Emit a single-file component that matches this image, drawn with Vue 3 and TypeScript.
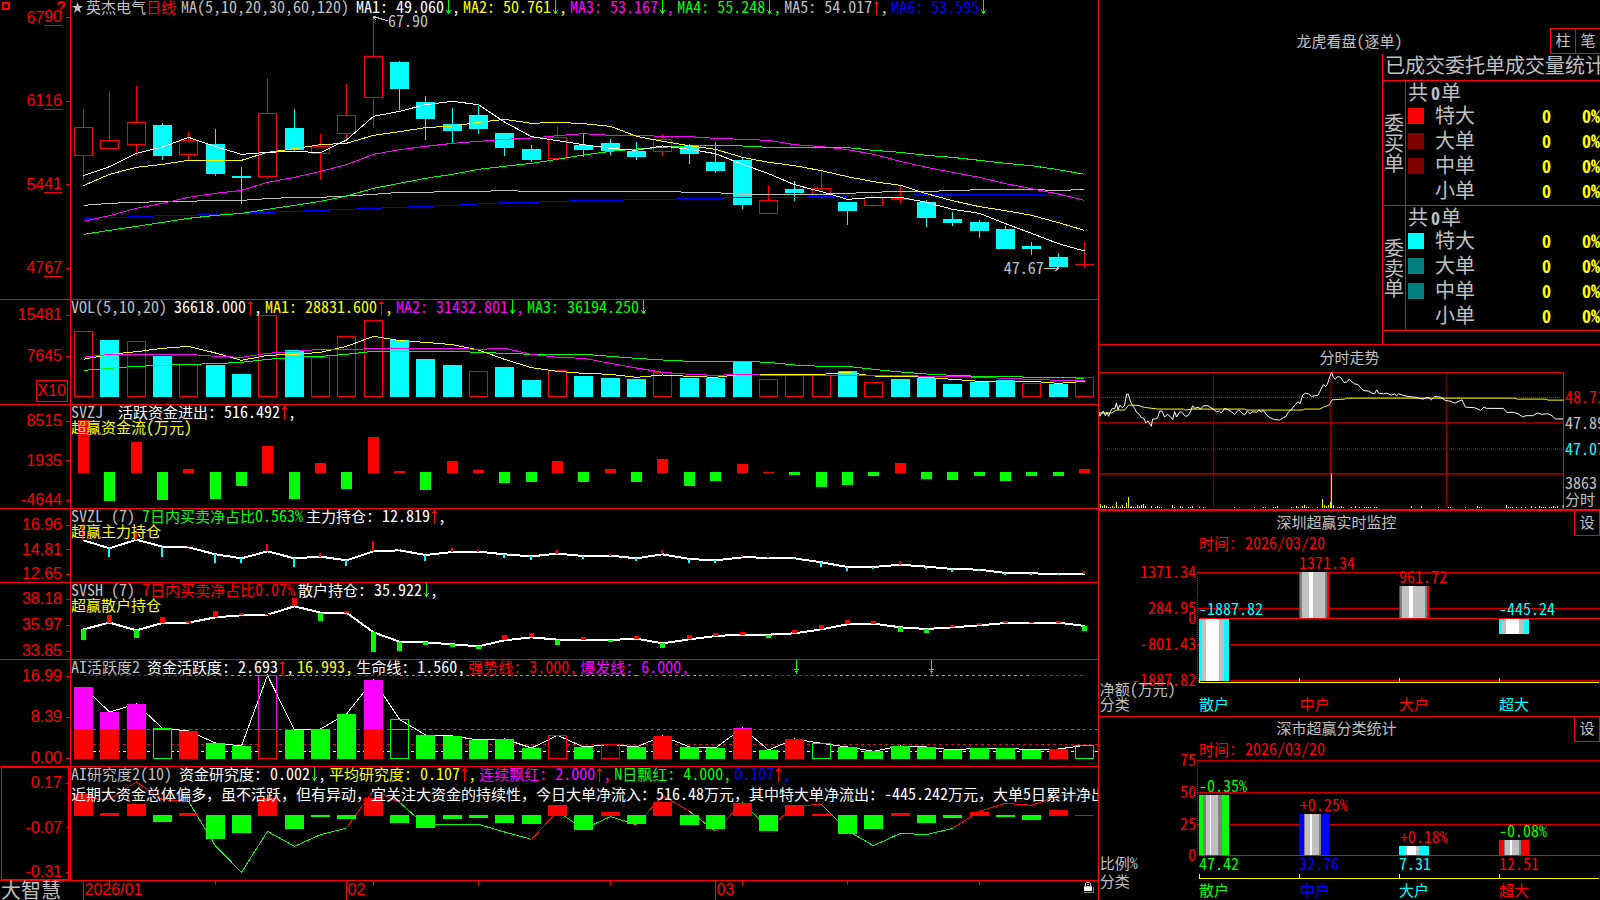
<script setup lang="ts">
import { h, type FunctionalComponent } from 'vue'

type Dir = 'up' | 'down' | ''
interface Item { text: string; color: string; dir?: Dir; comma?: boolean }
interface Box { x: number; y: number; w: number; h: number }

// Splits mixed text so that Han characters and half-width characters keep their own sizes.
const Mix: FunctionalComponent<{ t: string }> = (p) =>
  h('span', { class: 'mix' }, (p.t.match(/[\u3000-\uffef]+|[^\u3000-\uffef]+/g) ?? []).map((s) =>
    /[\u3000-\uffef]/.test(s) ? h('span', { class: 'han' }, s) : s))
Mix.props = ['t']

// Chart units: three per pixel.
const R = '#ff0000', G = '#00ff00', C = '#00ffff', M = '#ff00ff', Y = '#ffff00', W = '#ffffff', S = '#c0c0c0', B = '#0000ff'
const cx = (i: number) => 3 * Math.round(83 + 26.34 * i) + 1.5
const poly = (v: number[]) => v.map((y, i) => `${cx(i)},${y}`).join(' ')
const vb = (b: Box) => `${b.x} ${b.y} ${b.w} ${b.h}`
const at = (b: Box, x: number, y: number) => ({ left: `${(x - b.x) / b.w * 100}%`, top: `${(y - b.y) / b.h * 100}%` })
const atRight = (b: Box, x: number, y: number) => ({ right: `${(b.x + b.w - x) / b.w * 100}%`, top: `${(y - b.y) / b.h * 100}%` })

const boxes = {
  k: { x: 213, y: 0, w: 3081, h: 897 },
  vol: { x: 213, y: 15, w: 3081, h: 312 },
  zj: { x: 213, y: 330, w: 3081, h: 309 },
  zl: { x: 213, y: 642, w: 3081, h: 219 },
  sh: { x: 213, y: -21, w: 3081, h: 228 },
  act: { x: 213, y: 210, w: 3081, h: 318 },
  res: { x: 213, y: 531, w: 3081, h: 339 },
  date: { x: 213, y: 873, w: 3081, h: 57 },
  day: { x: 3, y: 96, w: 1395, h: 414 },
  net: { x: 3, y: 513, w: 1503, h: 615 },
  ratio: { x: 3, y: 351, w: 1503, h: 549 },
}

// high, body top, body bottom, low, rising
const candles: [number, number, number, number, number][] = [
  [327, 382, 466, 540, 1], [273, 421, 445, 445, 1], [258, 367, 433, 468, 1], [369, 375, 468, 480, 0], [396, 421, 463, 480, 1],
  [387, 432, 522, 528, 0], [501, 528, 534, 612, 0], [234, 340, 529, 537, 1], [327, 384, 450, 454, 0], [402, 439, 460, 540, 1],
  [252, 346, 401, 417, 1], [50, 169, 292, 384, 1], [183, 186, 267, 330, 0], [288, 306, 357, 420, 0], [323, 372, 393, 430, 0],
  [317, 345, 387, 402, 0], [399, 399, 444, 468, 0], [435, 447, 480, 486, 0], [378, 412, 476, 476, 1], [402, 435, 450, 470, 0],
  [417, 429, 453, 465, 0], [426, 453, 471, 480, 0], [402, 418, 455, 468, 1], [432, 438, 462, 492, 0], [426, 486, 513, 519, 0],
  [474, 480, 615, 627, 0], [555, 601, 640, 640, 1], [543, 567, 579, 603, 0], [512, 565, 588, 597, 1], [606, 606, 633, 675, 0],
  [588, 592, 616, 621, 1], [556, 595, 598, 609, 1], [600, 606, 654, 681, 0], [636, 657, 669, 678, 0], [660, 666, 693, 714, 0],
  [678, 687, 747, 747, 0], [726, 738, 747, 765, 0], [759, 771, 801, 806, 0], [726, 793, 793, 804, 1],
]
const averages = [
  { c: B, v: [655, 653, 650, 647, 646, 643, 640, 637, 634, 631, 628, 625, 622, 619, 616, 612, 608, 607, 604, 602, 601, 599, 598, 596, 595, 592, 592, 592, 590, 588, 586, 586, 584, 584, 584, 584, 584, 586, 586] },
  { c: S, v: [616, 610, 607, 605, 604, 601, 601, 596, 592, 592, 588, 583, 577, 577, 574, 574, 572, 574, 574, 574, 574, 574, 574, 577, 578, 583, 583, 583, 583, 580, 577, 574, 574, 572, 569, 569, 569, 571, 569] },
  { c: M, v: [664, 647, 625, 610, 592, 580, 571, 547, 532, 514, 494, 463, 449, 439, 430, 424, 418, 414, 407, 401, 406, 406, 409, 410, 415, 418, 421, 434, 440, 449, 463, 484, 502, 517, 532, 551, 566, 582, 601] },
  { c: G, v: [703, 691, 679, 667, 655, 646, 640, 628, 616, 604, 588, 565, 550, 535, 523, 508, 499, 490, 478, 465, 454, 447, 442, 437, 436, 438, 442, 442, 442, 443, 451, 457, 466, 472, 481, 490, 497, 509, 523] },
  { c: Y, v: [557, 523, 502, 493, 481, 481, 481, 457, 446, 434, 430, 406, 395, 383, 378, 367, 358, 370, 367, 371, 379, 409, 424, 437, 448, 472, 487, 497, 512, 530, 545, 556, 581, 602, 620, 632, 646, 668, 691] },
  { c: W, v: [527, 500, 460, 441, 412, 440, 463, 457, 454, 458, 420, 349, 334, 314, 304, 314, 366, 410, 422, 434, 445, 451, 438, 448, 461, 493, 521, 554, 575, 598, 592, 592, 607, 628, 640, 671, 700, 731, 753] },
]
const volumes = [109, 135, 139, 183, 208, 210, 237, 61, 165, 187, 124, 76, 135, 192, 210, 229, 216, 255, 226, 243, 249, 252, 231, 249, 249, 201, 253, 241, 241, 228, 262, 252, 249, 267, 261, 255, 265, 267, 247]
const volumeRise = new Set([0, 2, 4, 7, 9, 10, 11, 15, 18, 22, 26, 27, 28, 30, 36, 38])
const volumeAverages = [
  { c: G, v: [226, 220, 214, 211, 208, 206, 202, 193, 187, 184, 178, 169, 169, 169, 169, 172, 175, 178, 178, 178, 184, 190, 195, 199, 199, 199, 202, 210, 214, 214, 223, 231, 237, 241, 244, 244, 247, 247, 250] },
  { c: Y, v: [193, 178, 170, 160, 154, 174, 196, 181, 178, 172, 154, 124, 137, 142, 149, 165, 193, 218, 229, 235, 238, 247, 240, 244, 247, 238, 238, 238, 238, 232, 243, 244, 247, 253, 259, 259, 259, 265, 259] },
  { c: M, v: [187, 178, 178, 178, 178, 184, 187, 175, 169, 163, 165, 160, 160, 160, 160, 163, 160, 178, 187, 190, 205, 219, 232, 238, 241, 238, 241, 241, 241, 241, 241, 241, 244, 244, 247, 250, 253, 256, 256] },
]
const flows = [376, 618, 441, 615, 522, 612, 573, 453, 612, 504, 582, 426, 528, 585, 498, 525, 564, 561, 498, 561, 522, 561, 492, 573, 558, 507, 531, 540, 576, 570, 543, 504, 552, 555, 543, 558, 543, 543, 522]
const mainHold = [736, 760, 734, 755, 757, 778, 790, 769, 790, 785, 796, 769, 766, 780, 771, 770, 778, 784, 776, 783, 782, 790, 778, 792, 796, 787, 788, 790, 802, 816, 816, 809, 815, 822, 824, 834, 835, 837, 837]
const mainTips = [688, 785, 708, 786, 754, 804, 804, 747, 816, 774, 813, 738, 763, 798, 759, 766, 789, 795, 765, 792, 777, 798, 765, 804, 804, 780, 785, 792, 816, 828, 822, 798, 822, 831, 828, 840, 840, 840, 828]
const retailHold = [118, 98, 121, 99, 98, 82, 76, 74, 49, 68, 68, 127, 155, 157, 163, 169, 151, 142, 149, 150, 150, 146, 160, 148, 138, 134, 134, 130, 118, 103, 101, 112, 117, 112, 106, 99, 99, 98, 108]
const retailTips = [150, 75, 144, 81, 94, 63, 69, 72, 24, 93, 63, 186, 183, 165, 171, 177, 135, 129, 165, 141, 156, 138, 174, 135, 129, 126, 144, 120, 105, 90, 93, 126, 129, 105, 99, 93, 96, 94, 123]
const activity = [291, 366, 342, 415, 423, 459, 468, 256, 420, 417, 372, 270, 388, 435, 438, 450, 447, 474, 436, 471, 463, 471, 438, 471, 474, 414, 480, 447, 460, 471, 484, 468, 471, 480, 474, 474, 480, 477, 466]
const activityRed = new Set([0, 1, 2, 4, 7, 11, 18, 20, 22, 25, 27, 37])
const activityHollow = new Set([3, 7, 12, 18, 20, 28, 38])
const activityTone = (i: number) => (activityRed.has(i) ? R : G)
const research = [612, 669, 642, 696, 669, 747, 729, 624, 717, 681, 687, 624, 699, 714, 687, 684, 699, 702, 645, 720, 666, 702, 636, 705, 717, 639, 723, 645, 672, 732, 717, 669, 699, 684, 666, 681, 690, 660, 675]
const researchLine = [626, 628, 576, 629, 634, 768, 847, 724, 769, 734, 714, 600, 637, 706, 703, 703, 726, 748, 664, 717, 680, 704, 617, 664, 724, 637, 715, 648, 643, 722, 767, 730, 734, 715, 664, 640, 646, 617, 617]
type Run = [number, number, string]
const ceilingRuns: Run[] = [[0, 4, R], [4, 10, G], [10, 12, R], [12, 21, G], [21, 22, R], [22, 24, G], [24, 25, R], [25, 26, G], [26, 28, R], [28, 36, G], [36, 38, R]]
const researchRuns: Run[] = [[0, 4, R], [4, 10, G], [10, 12, R], [12, 17, G], [17, 18, R], [18, 21, G], [21, 23, R], [23, 24, G], [24, 25, R], [25, 26, G], [26, 28, R], [28, 33, G], [33, 38, R]]
const runPoints = (r: Run) => researchLine.slice(r[0], r[1] + 1).map((y, k) => `${cx(r[0] + k)},${y}`).join(' ')
const months = [{ i: 0, t: '2026/01' }, { i: 10, t: '02' }, { i: 24, t: '03' }]
const weeks = [1, 5, 11, 15, 20, 25, 29, 34]

const heads: Record<string, { name: string; items: Item[] }> = {
  k: { name: 'MA(5,10,20,30,60,120)', items: [
    { text: 'MA1: 49.060', color: W, dir: 'down', comma: true }, { text: 'MA2: 50.761', color: Y, dir: 'down', comma: true },
    { text: 'MA3: 53.167', color: M, dir: 'down', comma: true }, { text: 'MA4: 55.248', color: G, dir: 'down', comma: true },
    { text: 'MA5: 54.017', color: S, dir: 'up', comma: true }, { text: 'MA6: 53.595', color: B, dir: 'down' }] },
  vol: { name: 'VOL(5,10,20)', items: [
    { text: '36618.000', color: W, dir: 'up', comma: true }, { text: 'MA1: 28831.600', color: Y, dir: 'up', comma: true },
    { text: 'MA2: 31432.801', color: M, dir: 'down', comma: true }, { text: 'MA3: 36194.250', color: G, dir: 'down' }] },
  zj: { name: 'SVZJ ', items: [{ text: '活跃资金进出: 516.492', color: W, dir: 'up', comma: true }] },
  zl: { name: 'SVZL (7)', items: [{ text: '7日内买卖净占比0.563%', color: G }, { text: '主力持仓: 12.819', color: W, dir: 'up', comma: true }] },
  sh: { name: 'SVSH (7)', items: [{ text: '7日内买卖净占比0.07%', color: R }, { text: '散户持仓: 35.922', color: W, dir: 'down', comma: true }] },
  act: { name: 'AI活跃度2', items: [
    { text: '资金活跃度: 2.693', color: W, dir: 'up', comma: true }, { text: '16.993', color: Y, comma: true },
    { text: '生命线: 1.560', color: W, comma: true }, { text: '强势线: 3.000', color: R, comma: true }, { text: '爆发线: 6.000', color: M, comma: true }] },
  res: { name: 'AI研究度2(10)', items: [
    { text: '资金研究度: 0.002', color: W, dir: 'down', comma: true }, { text: '平均研究度: 0.107', color: Y, dir: 'up', comma: true },
    { text: '连续飘红: 2.000', color: M, dir: 'up', comma: true }, { text: 'N日飘红: 4.000', color: G, comma: true }, { text: '0.107', color: B, dir: 'up', comma: true }] },
}
const panels = [
  { id: 'k', ticks: ['6790', '6116', '5441', '4767'], note: '' },
  { id: 'vol', ticks: ['15481', '7645'], note: '' },
  { id: 'zj', ticks: ['8515', '1935', '-4644'], note: '超赢资金流(万元)' },
  { id: 'zl', ticks: ['16.96', '14.81', '12.65'], note: '超赢主力持仓' },
  { id: 'sh', ticks: ['38.18', '35.97', '33.85'], note: '超赢散户持仓' },
  { id: 'act', ticks: ['16.99', '8.39', '0.00'], note: '' },
  { id: 'res', ticks: ['0.17', '-0.07', '-0.31'], note: '近期大资金总体偏多，虽不活跃，但有异动，宜关注大资金的持续性，今日大单净流入：516.48万元，其中特大单净流出：-445.242万元，大单5日累计净出' },
] as const

const orders = [
  { side: '委买单', rows: [['特大', '#ff0000'], ['大单', '#800000'], ['中单', '#800000'], ['小单', '#000000']] },
  { side: '委卖单', rows: [['特大', '#00ffff'], ['大单', '#008080'], ['中单', '#008080'], ['小单', '#000000']] },
]

const dayPrice = '4,218 6,230 10,222 16,214 22,228 27,218 32,230 37,216 43,206 50,208 55,190 60,210 66,196 73,204 80,196 86,163 91,163 97,184 103,196 110,206 116,218 124,224 130,234 138,236 143,250 150,244 160,260 164,238 172,238 179,234 185,214 192,214 200,232 208,224 216,230 224,240 230,216 236,232 244,218 250,216 262,230 270,228 278,214 284,198 290,206 300,202 308,208 316,198 330,198 342,206 356,216 364,214 370,220 380,206 390,210 400,216 410,224 422,210 432,220 440,226 448,214 456,222 464,216 476,218 482,212 490,216 496,212 506,226 516,234 530,240 545,241 556,234 564,230 572,216 580,210 590,196 600,186 606,192 614,166 622,160 632,162 640,170 650,168 660,166 668,150 676,134 684,140 690,128 696,108 701,97 706,112 712,118 718,110 728,112 738,128 746,126 754,118 762,126 770,132 780,134 790,146 798,152 812,154 822,160 830,162 836,150 842,160 856,162 866,160 880,166 890,162 896,168 902,162 914,166 930,170 950,172 974,178 990,172 1000,180 1010,170 1028,172 1042,182 1056,184 1070,190 1092,180 1102,202 1130,204 1148,212 1158,202 1166,206 1216,206 1226,218 1246,218 1260,222 1274,232 1284,228 1304,228 1318,220 1332,224 1350,222 1362,228 1372,238 1396,238'
const dayAverage = '4,220 40,220 56,211 80,211 92,196 120,197 140,203 180,208 256,208 262,211 282,208 440,208 446,211 614,211 620,208 666,208 676,202 694,196 702,180 740,178 746,175 1250,175 1258,178 1344,178 1350,181 1396,181'
const dayVolume: [number, number][] = [
  [7, 495], [13, 501], [19, 498], [25, 501], [31, 504], [37, 504], [43, 501], [49, 504], [55, 489], [61, 504], [67, 504], [73, 498], [79, 504], [85, 492], [91, 474],
  [97, 504], [100, 501], [106, 504], [112, 504], [118, 498], [124, 501], [130, 498], [136, 495], [142, 501], [160, 501], [172, 504], [178, 501], [184, 504], [190, 504],
  [223, 498], [229, 504], [247, 501], [253, 504], [271, 504], [277, 504], [283, 501], [304, 504], [316, 504], [409, 504], [469, 504], [496, 504], [502, 504], [526, 504], [532, 504], [538, 501],
  [580, 504], [595, 501], [601, 504], [613, 501], [619, 498], [625, 504], [631, 504], [658, 504], [673, 480], [679, 498], [685, 501], [691, 498], [697, 489], [700, 402],
  [706, 498], [718, 504], [724, 504], [730, 501], [736, 504], [760, 504], [772, 501], [784, 504], [799, 504], [805, 504], [811, 504], [817, 504], [829, 504], [835, 504],
  [940, 501], [970, 501], [1021, 504], [1051, 504], [1057, 504], [1102, 504], [1138, 501], [1144, 504], [1150, 504], [1225, 498], [1231, 504], [1237, 504], [1243, 504], [1255, 504], [1270, 504], [1282, 504],
  [1300, 501], [1312, 504], [1324, 501], [1330, 504], [1336, 504], [1342, 504], [1354, 504], [1360, 504], [1366, 501], [1372, 504], [1378, 501], [1395, 498],
]
const dayLabels = [{ y: 175, t: '48.71', c: R }, { y: 253, t: '47.89', c: S }, { y: 331, t: '47.07', c: C }, { y: 434, t: '3863', c: S }, { y: 484, t: '分时', c: S }]

const D = '#808080'
type Stripe = [number, string]
interface Bar { x: number; y: number; h: number; stripes: Stripe[] }
const silver: Stripe[] = [[3, R], [6, D], [21, S], [12, W], [36, S], [6, D], [6, R]]
const icy: Stripe[] = [[9, C], [12, S], [39, W], [15, S], [15, C]]
const netBars: Bar[] = [
  { x: 303, y: 837, h: 186, stripes: icy }, { x: 603, y: 696, h: 138, stripes: silver },
  { x: 903, y: 738, h: 96, stripes: silver }, { x: 1203, y: 837, h: 45, stripes: icy },
]
const ratioBars: Bar[] = [
  { x: 303, y: 585, h: 180, stripes: [[12, G], [9, D], [12, S], [3, W], [21, S], [12, D], [21, G]] },
  { x: 603, y: 642, h: 123, stripes: [[15, B], [3, D], [15, S], [6, W], [21, S], [6, D], [24, B]] },
  { x: 903, y: 738, h: 27, stripes: [[18, C], [6, S], [27, W], [9, S], [30, C]] },
  { x: 1203, y: 720, h: 45, stripes: [[15, R], [3, D], [15, S], [6, W], [21, S], [6, D], [24, R]] },
]
const offset = (s: Stripe[], k: number) => s.slice(0, k).reduce((a, b) => a + b[0], 0)

interface Label { x: number; y: number; t: string; c: string; right?: boolean }
const stats: { id: 'net' | 'ratio'; title: string; grid: number[]; top: number; zero: number; axis: number; bars: Bar[]; labels: Label[] }[] = [
  { id: 'net', title: '深圳超赢实时监控', grid: [697, 805, 913, 1021], top: 697, zero: 835, axis: 1027, bars: netBars, labels: [
    { x: 303, y: 612, t: '时间: 2026/03/20', c: R },
    { x: 294, y: 700, t: '1371.34', c: R, right: true }, { x: 294, y: 808, t: '284.95', c: R, right: true }, { x: 294, y: 838, t: '0', c: R, right: true },
    { x: 294, y: 916, t: '-801.43', c: R, right: true }, { x: 294, y: 1024, t: '-1887.82', c: R, right: true },
    { x: 603, y: 673, t: '1371.34', c: R }, { x: 903, y: 715, t: '961.72', c: R },
    { x: 303, y: 811, t: '-1887.82', c: C }, { x: 1203, y: 811, t: '-445.24', c: C },
    { x: 5, y: 1049, t: '净额(万元)', c: S }, { x: 5, y: 1095, t: '分类', c: S },
    { x: 303, y: 1095, t: '散户', c: C }, { x: 605, y: 1095, t: '中户', c: R }, { x: 903, y: 1095, t: '大户', c: R }, { x: 1203, y: 1095, t: '超大', c: C }] },
  { id: 'ratio', title: '深市超赢分类统计', grid: [481, 577, 673], top: 481, zero: 766, axis: 835, bars: ratioBars, labels: [
    { x: 303, y: 450, t: '时间: 2026/03/20', c: R },
    { x: 294, y: 484, t: '75', c: R, right: true }, { x: 294, y: 580, t: '50', c: R, right: true }, { x: 294, y: 676, t: '25', c: R, right: true }, { x: 294, y: 769, t: '0', c: R, right: true },
    { x: 303, y: 562, t: '-0.35%', c: G }, { x: 605, y: 619, t: '+0.25%', c: R }, { x: 905, y: 715, t: '+0.18%', c: R }, { x: 1203, y: 697, t: '-0.08%', c: G },
    { x: 5, y: 793, t: '比例%', c: S }, { x: 5, y: 847, t: '分类', c: S },
    { x: 303, y: 796, t: '47.42', c: G }, { x: 603, y: 796, t: '32.76', c: B }, { x: 903, y: 796, t: '7.31', c: C }, { x: 1203, y: 796, t: '12.51', c: R },
    { x: 303, y: 874, t: '散户', c: G }, { x: 605, y: 874, t: '中户', c: B }, { x: 903, y: 874, t: '大户', c: C }, { x: 1203, y: 874, t: '超大', c: R }] },
]
</script>

<template>
  <main class="desk">
    <section class="charts">
      <article v-for="p in panels" :key="p.id" class="panel" :class="p.id">
        <div class="axis">
          <template v-if="p.id === 'k'">
            <svg class="corner" viewBox="0 0 9 9" shape-rendering="crispEdges"><path d="M1 1h6v6h-6z" fill="none" stroke="#f00" stroke-width="2" /><path d="M7 7h1v1h-1z" fill="#f00" /></svg>
            <span class="help">?</span>
          </template>
          <span v-for="t in p.ticks" :key="t" class="tick"><template v-if="p.id === 'k'">{{ t.slice(0, 2) }}<u>{{ t.slice(2) }}</u></template><template v-else>{{ t }}</template></span>
          <span v-if="p.id === 'vol'" class="scale">X10</span>
        </div>
        <div class="plot">
          <svg class="fill" :viewBox="vb(boxes[p.id])" preserveAspectRatio="none" shape-rendering="crispEdges" fill="none" stroke-width="3">
            <template v-if="p.id === 'k'">
              <g v-for="(c, i) in candles" :key="i" :stroke="c[4] ? R : C">
                <template v-if="c[4]">
                  <path :d="`M${cx(i)} ${c[0]}V${c[1]}M${cx(i)} ${c[2]}V${c[3]}`" />
                  <path v-if="c[1] === c[2]" :d="`M${cx(i) - 28.5} ${c[1]}h57`" />
                  <rect v-else :x="cx(i) - 27" :y="c[1]" width="54" :height="c[2] - c[1]" />
                </template>
                <template v-else>
                  <path :d="`M${cx(i)} ${c[0]}V${c[3]}`" />
                  <rect :x="cx(i) - 28.5" :y="c[1]" width="57" :height="c[2] - c[1]" :fill="C" stroke="none" />
                </template>
              </g>
              <polyline v-for="a in averages" :key="a.c" :points="poly(a.v)" :stroke="a.c" />
              <path d="M1120 49l43 14M1120 49h9M1120 49l6 10M3132 805h43M3166 796l9 9l-9 9" :stroke="S" />
            </template>
            <template v-else-if="p.id === 'vol'">
              <template v-for="(v, i) in volumes" :key="i">
                <rect v-if="volumeRise.has(i)" :x="cx(i) - 27" :y="v" width="54" :height="304 - v" :stroke="R" />
                <rect v-else :x="cx(i) - 28.5" :y="v" width="57" :height="306 - v" :fill="C" />
              </template>
              <polyline v-for="a in volumeAverages" :key="a.c" :points="poly(a.v)" :stroke="a.c" />
            </template>
            <template v-else-if="p.id === 'zj'">
              <rect v-for="(v, i) in flows" :key="i" :x="cx(i) - 16.5" :y="Math.min(v, 531)" width="33" :height="v < 534 ? 534 - v : v - 531" :fill="v < 534 ? R : G" />
            </template>
            <template v-else-if="p.id === 'zl'">
              <polyline :points="poly(mainHold)" :stroke="W" stroke-width="6" />
              <path v-for="(v, i) in mainTips" :key="i" :d="`M${cx(i) - 1.5} ${mainHold[i]}V${v}`" :stroke="v < mainHold[i] ? R : C" stroke-width="6" />
            </template>
            <template v-else-if="p.id === 'sh'">
              <polyline :points="poly(retailHold)" :stroke="W" stroke-width="6" />
              <path v-for="(v, i) in retailTips" :key="i" :d="`M${cx(i)} ${retailHold[i]}V${v}`" :stroke="v < retailHold[i] ? R : G" stroke-width="15" />
            </template>
            <template v-else-if="p.id === 'act'">
              <path v-for="r in ceilingRuns" :key="r[0]" :d="`M${cx(r[0])} 256H${cx(r[1])}`" :stroke="r[2]" stroke-dasharray="9 9" />
              <path d="M280 418H3294" :stroke="M" stroke-dasharray="9 9" />
              <path d="M280 463H3294" :stroke="R" stroke-dasharray="9 9" />
              <path d="M280 484H3294" :stroke="W" stroke-dasharray="9 9" />
              <rect v-for="i in activityHollow" :key="i" :x="cx(i) - 28" :y="activity[i]" width="57" :height="507 - activity[i]" fill="#000" />
              <polyline :points="poly(activity)" :stroke="W" />
              <template v-for="(v, i) in activity" :key="i">
                <g v-if="activityHollow.has(i)">
                  <rect :x="cx(i) - 27" :y="v" width="54" :height="505 - v" :stroke="activityTone(i)" />
                  <path v-if="i === 7" :d="`M${cx(i) - 27} 418V${v}h54V418`" :stroke="M" />
                  <path v-if="v < 417" :d="`M${cx(i) - 27} 418h54`" :stroke="activityTone(i)" />
                </g>
                <g v-else>
                  <rect :x="cx(i) - 28.5" :y="v" width="57" :height="507 - v" :fill="activityTone(i)" />
                  <rect v-if="v < 417 && activityRed.has(i)" :x="cx(i) - 28.5" :y="v" width="57" :height="417 - v" :fill="M" />
                </g>
              </template>
              <path d="M2389.5 210v42M2382 239h15M2386 243h8M2794.5 210v42M2787 239h15M2791 243h8" :stroke="G" />
            </template>
            <template v-else>
              <polyline v-for="r in researchRuns" :key="r[0]" :points="runPoints(r)" :stroke="r[2]" />
              <rect v-for="(v, i) in research" :key="i" :x="cx(i) - 28.5" :y="Math.min(v, 675)" width="57" :height="v < 678 ? 678 - v : v - 675" :fill="v < 678 ? R : G" />
            </template>
          </svg>
          <template v-if="p.id === 'k'">
            <span class="pin" :style="at(boxes.k, 1164, 67)">67.90</span>
            <span class="pin" :style="atRight(boxes.k, 3131, 808)">47.67</span>
          </template>
          <header class="head">
            <template v-if="p.id === 'k'">
              <svg class="star" viewBox="0 0 12 12"><path d="M6 0l1.5 4.4H12L8.400 7.200 9.700 12 6 9.100 2.300 12l1.300-4.800L0 4.400h4.500z" :fill="S" /></svg>
              <span class="stock"><Mix t="英杰电气" /><span class="period"><Mix t="日线" /></span></span>
            </template>
            <span class="name"><Mix :t="heads[p.id].name" /></span>
            <span v-for="(it, k) in heads[p.id].items" :key="k" class="item" :style="{ color: it.color }"><Mix :t="it.text" /><svg v-if="it.dir" class="arrow" viewBox="0 0 8 15" shape-rendering="crispEdges"><path v-if="it.dir === 'up'" d="M4 1h1v14h-1zM3 2h3v1h-3zM2 3h5v1h-5z" :fill="R" /><path v-else d="M4 0h1v14h-1zM2 10h1v1h3v-1h1v1h-1v2h-3v-2h-1z" :fill="G" /></svg><template v-if="it.comma">,</template></span>
          </header>
          <p v-if="p.note" class="note"><Mix :t="p.note" /></p>
        </div>
      </article>
      <footer class="dates">
        <strong class="brand">大智慧</strong>
        <div class="plot">
          <svg class="fill" :viewBox="vb(boxes.date)" preserveAspectRatio="none" shape-rendering="crispEdges">
            <path v-for="m in months" :key="m.i" :d="`M${cx(m.i)} 870V930`" :stroke="R" stroke-width="3" />
            <path v-for="w in weeks" :key="w" :d="`M${cx(w)} 870V885`" :stroke="R" stroke-width="3" />
          </svg>
          <span v-for="m in months" :key="m.i" class="month" :style="at(boxes.date, cx(m.i) + 3, 901)">{{ m.t }}</span>
          <svg class="lock" viewBox="0 0 10 11" shape-rendering="crispEdges"><path d="M2 0h4v1h-4zM1 1h1v3h-1zM6 1h1v3h-1zM3 2h2v1h-2z" fill="#c0c0c0" /><path d="M0 4h8v5h-8z" fill="#fff" /><path d="M0 4h8v1h-8z" fill="#c0c0c0" /><path d="M9 5h1v6h-10v-1h9z" fill="#808080" /></svg>
        </div>
      </footer>
    </section>

    <aside class="side">
      <section class="board">
        <header class="boardhead">
          <h2><Mix t="龙虎看盘(逐单)" /></h2>
          <span class="modes"><button type="button">柱</button><button type="button">笔</button></span>
        </header>
        <div class="orders">
          <table>
            <caption><span>已成交委托单成交量统计</span></caption>
            <colgroup><col class="c-side"><col class="c-swatch"><col class="c-kind"><col class="c-count"><col></colgroup>
            <tbody v-for="o in orders" :key="o.side">
              <tr><th rowspan="5" scope="rowgroup"><span>{{ o.side }}</span></th><td colspan="4" class="total">共<b>0</b>单</td></tr>
              <tr v-for="r in o.rows" :key="r[0]">
                <td class="swatch"><svg viewBox="0 0 16 16"><rect width="16" height="16" :fill="r[1]" /></svg></td>
                <td class="kind">{{ r[0] }}</td><td class="num">0</td><td class="num">0%</td>
              </tr>
            </tbody>
          </table>
        </div>
      </section>

      <section class="day">
        <h2><Mix t="分时走势" /></h2>
        <div class="dayrow">
          <svg :viewBox="vb(boxes.day)" preserveAspectRatio="none" shape-rendering="crispEdges" fill="none" stroke-width="3" class="dayplot">
            <path d="M3 173H1396M3 329H1396M347 98V507M698 98V507M1046 98V507" :stroke="R" stroke-dasharray="3 3" />
            <path d="M3 98H1396.5V510M3 250H1396M3 404H1396" :stroke="R" />
            <polyline :points="dayAverage" :stroke="Y" />
            <polyline :points="dayPrice" :stroke="W" />
            <path v-for="v in dayVolume" :key="v[0]" :d="`M${v[0] + 0.5} ${v[1]}V507`" :stroke="Y" />
          </svg>
          <div class="dayaxis">
            <span v-for="l in dayLabels" :key="l.t" class="pin" :style="{ top: at(boxes.day, 0, l.y).top, color: l.c }"><Mix :t="l.t" /></span>
          </div>
        </div>
      </section>

      <section v-for="s in stats" :key="s.id" class="stat" :class="s.id">
        <header class="stathead"><h2><Mix :t="s.title" /></h2><button type="button">设</button></header>
        <svg class="fill" :viewBox="vb(boxes[s.id])" preserveAspectRatio="none" shape-rendering="crispEdges" fill="none" stroke-width="3">
          <path v-for="g in s.grid" :key="g" :d="`M300 ${g}H1506`" :stroke="R" stroke-dasharray="3 3" />
          <path :d="`M298.500 ${s.top}V${s.id === 'ratio' ? s.zero : s.grid[3]}`" :stroke="R" stroke-dasharray="3 3" />
          <template v-for="b in s.bars" :key="b.x">
            <rect v-for="(q, k) in b.stripes" :key="k" :x="b.x + offset(b.stripes, k)" :y="b.y" :width="q[0]" :height="b.h" :fill="q[1]" />
          </template>
          <path :d="`M303 ${s.zero}H1506`" :stroke="R" />
          <path :d="`M304.500 ${s.axis - 12}V${s.axis}H1503M604.500 ${s.axis}v-12M904.500 ${s.axis}v-12M1204.500 ${s.axis}v-12`" :stroke="Y" />
        </svg>
        <span v-for="(l, k) in s.labels" :key="k" class="pin" :style="{ ...(l.right ? atRight(boxes[s.id], l.x, l.y) : at(boxes[s.id], l.x, l.y)), color: l.c }"><Mix :t="l.t" /></span>
      </section>
    </aside>
  </main>
</template>

<style>
html, body { margin: 0; background: #000; overflow: hidden; }
.mix { white-space: pre; }
.mix .han { font-size: 15px; }
</style>

<style scoped>
.desk { display: grid; grid-template-columns: 1098fr 502fr; height: 100vh; background: #000; color: #c0c0c0; font: 16px/16px "Noto Sans Mono CJK SC", "Noto Sans CJK SC", monospace; font-weight: 300; overflow: hidden; }
h2, p { margin: 0; font-weight: inherit; font-size: inherit; }
button { box-sizing: border-box; width: 26px; height: 26px; padding: 0 0 2px; background: #000; border: 1px solid #f00; color: inherit; font: inherit; font-size: 15px; line-height: 16px; }
.charts { display: grid; grid-template-rows: 300fr 105fr 104fr 74fr 77fr 107fr 114fr 19fr; min-width: 0; }
.panel { display: grid; grid-template-columns: 71px 1fr; border-bottom: 1px solid #f00; min-height: 0; min-width: 0; }
.axis { position: relative; box-sizing: border-box; display: flex; flex-direction: column; justify-content: space-between; align-items: flex-end; padding-top: 8px; border-right: 1px solid #f00; color: #f00; font-family: "Liberation Sans", sans-serif; font-weight: 400; min-height: 0; }
.k .axis { padding-top: 9px; padding-bottom: 22px; }
.vol .axis { justify-content: flex-start; gap: 16px; padding-top: 7px; }
.vol .tick:first-child { margin-bottom: 9px; }
.res .axis::before { content: ""; position: absolute; inset: 0 1px 0 1px; border: 1px solid #f00; }
.tick { display: flex; align-items: center; line-height: 16px; }
.tick::after { content: ""; width: 4px; height: 1px; margin-left: 4px; background: #f00; }
.tick u { text-decoration: none; border-bottom: 1px solid #f00; }
.scale { box-sizing: border-box; height: 22px; padding: 0 1px; margin-right: 2px; border: 1px solid #f00; line-height: 20px; }
.corner { position: absolute; left: 2px; top: 2px; width: 9px; height: 9px; }
.help { position: absolute; right: 4px; top: 0; font-weight: 700; }
.plot { position: relative; min-width: 0; min-height: 0; overflow-x: clip; overflow-y: visible; }
.fill { position: absolute; inset: 0; width: 100%; height: 100%; }
.head { position: relative; display: flex; align-items: flex-start; height: 15px; line-height: 12px; white-space: nowrap; }
.head .name { margin-right: 7px; }
.k .name { margin-left: 5px; }
.star { width: 11px; height: 11px; margin: 2px 3px 0 1px; }
.period { color: #f00; }
.item { display: flex; align-items: flex-start; margin-right: 3px; }
.arrow { width: 8px; height: 15px; }
.note { position: relative; margin-top: -1px; color: #ff0; white-space: nowrap; line-height: 15px; }
.res .note { color: #fff; margin-top: 4px; }
.dates { display: grid; grid-template-columns: 71px 1fr; min-height: 0; }
.brand { font-size: 20px; line-height: 17px; font-weight: inherit; padding-left: 1px; }
.pin { position: absolute; margin-top: -2px; transform: translateY(-50%); white-space: nowrap; }
.month { position: absolute; transform: translateY(-50%); color: #f00; font-family: "Liberation Sans", sans-serif; font-weight: 400; }
.lock { position: absolute; right: 4px; top: 1px; width: 10px; height: 11px; }

.side { display: grid; grid-template-rows: 345fr 166fr 206fr 183fr; border-left: 1px solid #f00; min-width: 0; min-height: 0; overflow: hidden; }
.board { display: flex; flex-direction: column; border-bottom: 1px solid #f00; min-height: 0; }
.boardhead { display: grid; grid-template-columns: 1fr auto 1fr; align-items: center; padding-top: 28px; }
.boardhead h2 { grid-column: 2; padding-bottom: 2px; }
.modes { display: flex; justify-self: end; margin-right: -1px; }
.modes button + button { margin-left: -1px; }
.orders { flex: 1; align-self: flex-end; width: 217px; border-left: 1px solid #f00; overflow-x: clip; font-size: 20px; line-height: 20px; }
table { width: 217px; border-collapse: separate; border-spacing: 0; table-layout: fixed; }
.c-side { width: 23px; }
.c-swatch { width: 29px; }
.c-kind { width: 60px; }
.c-count { width: 56px; }
caption { box-sizing: border-box; height: 27px; padding: 1px 0 0 2px; border-bottom: 1px solid #f00; text-align: left; white-space: nowrap; }
caption span { display: block; width: 0; }
th { padding: 0; border-right: 1px solid #f00; border-bottom: 1px solid #f00; font-weight: inherit; }
th span { display: block; width: 20px; margin-left: 1px; white-space: normal; word-break: break-all; }
td { box-sizing: border-box; padding: 0 0 2px; height: 25px; }
tbody tr:last-child td { height: 28px; padding-bottom: 4px; border-bottom: 1px solid #f00; }
.total { height: 22px; padding: 0 0 0 2px; white-space: nowrap; }
.total b { margin: 0 1px 0 3px; font-size: 18px; font-weight: 700; }
.swatch { padding: 0 0 0 2px; }
.swatch svg { display: block; width: 16px; height: 16px; }
.num { color: #ff0; font-weight: 700; font-size: 18px; text-align: right; }
.day { display: flex; flex-direction: column; border-bottom: 2px solid #f00; min-height: 0; }
.day h2 { height: 27px; line-height: 22px; text-align: center; }
.dayrow { flex: 1; display: grid; grid-template-columns: 465fr 36fr; min-height: 0; }
.dayplot { width: 100%; height: 100%; min-height: 0; }
.dayaxis { position: relative; }
.dayaxis .pin { left: 1px; }
.stat { position: relative; min-height: 0; }
.net { border-bottom: 1px solid #f00; }
.stathead { display: grid; grid-template-columns: 1fr auto; text-align: center; line-height: 20px; }
.stathead button { margin-top: -1px; }
</style>
